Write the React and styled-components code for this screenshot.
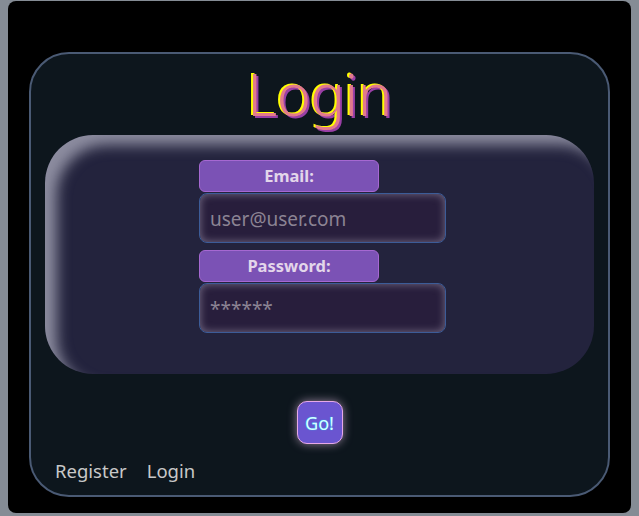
import React from 'react'
import styled, { createGlobalStyle } from 'styled-components';

const GlobalStyle = createGlobalStyle`
    html, body {
        margin: 0;
        background: #858c95;
    }
    body {
        padding: 1px 8px 0 8px;
        font-family: "Noto Sans", "Open Sans", sans-serif;
    }
`

function App() {
    return (
        <>
            <GlobalStyle />
            <Screen>
                <Card>
                    <Title>Login</Title>
                    <Glass>
                        <Form>
                            <Label>Email:</Label>
                            <Input type="text" placeholder="user@user.com" />
                            <Label $top={7}>Password:</Label>
                            <Input type="password" placeholder="******" />
                        </Form>
                    </Glass>
                    <GoRow>
                        <GoButton>Go!</GoButton>
                    </GoRow>
                    <Links>
                        <a href="#register">Register</a>
                        <a href="#login">Login</a>
                    </Links>
                </Card>
            </Screen>
        </>
    )
}

export default App

const Screen = styled.div`
    background: #000;
    height: 512px;
    border-radius: 8px;
    padding: 51px 21px 0 21px;
    box-sizing: border-box;
`

const Card = styled.div`
    height: 445px;
    box-sizing: border-box;
    border: 2px solid #4a5a74;
    border-radius: 40px;
    background: #0d161d;
    padding: 0 14px;
    display: flex;
    flex-direction: column;
`

const Title = styled.h1`
    margin: 2px 0 4px 0;
    height: 75px;
    text-align: center;
    font-weight: 300;
    font-size: 58px;
    line-height: 75px;
    letter-spacing: -0.5px;
    color: #e27a8c;
    text-shadow: -2px -1px 0 #ffff00, 2px 2px 0 #9a3fa6;
`

const Glass = styled.div`
    height: 239px;
    box-sizing: border-box;
    border-radius: 48px;
    background: #23233d;
    box-shadow: inset 14px 12px 14px -2px rgba(210, 210, 225, 0.6);
    padding: 25px 0 0 0;
    display: flex;
    justify-content: center;
`

const Form = styled.div`
    width: 247px;
    margin-left: 6px;
    display: flex;
    flex-direction: column;
`

const Label = styled.label`
    width: 180px;
    height: 32px;
    box-sizing: border-box;
    margin-top: ${p => p.$top || 0}px;
    margin-bottom: 1px;
    background: #7b52b5;
    border: 1px solid #a668d2;
    border-radius: 6px;
    color: #e3d6ea;
    font-weight: 700;
    font-size: 16.5px;
    line-height: 30px;
    text-align: center;
`

const Input = styled.input`
    width: 247px;
    height: 50px;
    box-sizing: border-box;
    background: #281e3c;
    border: 1px solid #3c5c98;
    border-radius: 8px;
    box-shadow: inset 0 0 9px rgba(200, 190, 210, 0.5);
    padding: 2px 10px 0 10px;
    font-family: "Noto Sans", "Open Sans", sans-serif;
    font-size: 19px;
    color: #ddd;
    outline: none;
    &::placeholder {
        color: #8c8494;
    }
`

const GoRow = styled.div`
    display: flex;
    justify-content: center;
    margin-top: 27px;
`

const GoButton = styled.button`
    width: 46px;
    height: 43px;
    background: #6a55d0;
    border: 1px solid #e6a8e8;
    border-radius: 10px;
    box-shadow: 0 0 10px rgba(255, 215, 255, 0.55);
    color: #d8fbff;
    text-shadow: 0 0 1px #00e5ff;
    font-family: "Noto Sans", "Open Sans", sans-serif;
    font-size: 18px;
    padding: 0;
    cursor: pointer;
`

const Links = styled.div`
    display: flex;
    gap: 20px;
    margin-top: 14px;
    padding-left: 10px;
    a {
        color: #c8c8c8;
        text-decoration: none;
        font-size: 18.5px;
    }
`
